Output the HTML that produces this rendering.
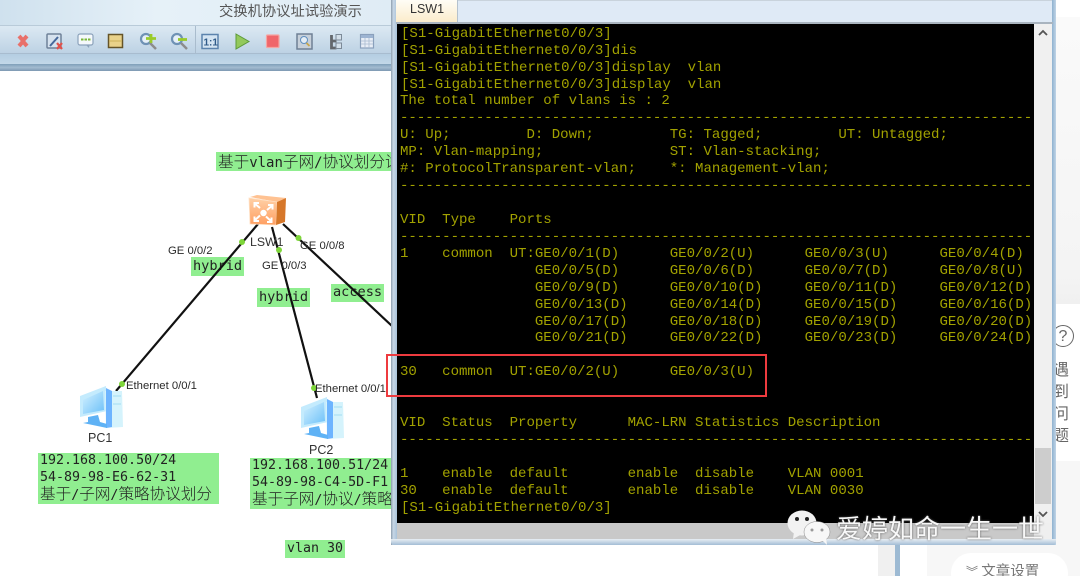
<!DOCTYPE html>
<html><head><meta charset="utf-8"><style>
html,body{margin:0;padding:0;background:#fff}
#p{position:relative;width:1080px;height:576px;overflow:hidden;background:#fff;font-family:"Liberation Sans","Noto Sans CJK SC",sans-serif}
.a{position:absolute}
.lb{position:absolute;background:#90ee90;color:#222;font-family:"DejaVu Sans Mono","Noto Sans CJK SC",monospace;font-size:13.3px;white-space:pre;overflow:hidden}
.lb div{position:absolute;left:2px;white-space:pre}
.c{font-family:"Noto Sans CJK SC",sans-serif;font-size:15.6px;font-weight:300}
.t{position:absolute;font-size:11.3px;color:#2a2a2a;white-space:pre;line-height:13px}
#term{position:absolute;left:397px;top:24px;width:637px;height:499px;background:#000;overflow:hidden}
#term div{position:absolute;left:3px;height:17px;line-height:17px;font-family:"Liberation Mono",monospace;font-size:14.06px;color:#a2a200;white-space:pre}
</style></head><body><div id="p">

<div class="a" style="left:0;top:0;width:392px;height:25px;background:linear-gradient(90deg,#cfe1ee,#e6f1f8 40%,#dfecf5)"></div>
<div class="a" style="left:0;top:25px;width:392px;height:1px;background:#b9cbd9"></div>
<div class="a" style="left:0;top:26px;width:392px;height:27px;background:linear-gradient(#dce9f3,#bdd2e4)"></div>
<div class="a" style="left:0;top:53px;width:392px;height:1px;background:#a8bccf"></div>
<div class="a" style="left:0;top:54px;width:392px;height:10px;background:linear-gradient(#b4cde2,#c2d7e8)"></div>
<div class="a" style="left:0;top:64px;width:392px;height:7px;background:linear-gradient(#7f9fb9,#a3bbd0 50%,#7c98b2)"></div>
<div class="a" style="left:195px;top:26px;width:1px;height:27px;background:#a9bccd"></div>
<div class="a" style="left:219px;top:1px;font-size:14.3px;line-height:20px;color:#555;white-space:pre;font-family:'Noto Sans CJK SC',sans-serif">交换机协议址试验演示</div>

<svg class="a" style="left:0;top:26px" width="392" height="28" viewBox="0 26 392 28">
<path d="M19 36l4 4.500 4-4.500M19 46l4-4.500 4 4.500" fill="none" stroke="#e8706a" stroke-width="4"/>
<rect x="47" y="34" width="14" height="14" rx="1" fill="#d6e2ee" stroke="#6f8199" stroke-width="1.500"/><path d="M50 46l8-9" stroke="#46689a" stroke-width="2"/><path d="M57 43l5 6m0-6l-5 6" stroke="#e0524c" stroke-width="2.200"/>
<rect x="78" y="34" width="15" height="11" rx="2" fill="#f4f8fb" stroke="#8ba2bb" stroke-width="1.200"/><path d="M86 45l3 3 .5-3z" fill="#8ba2bb"/><path d="M81 39.500h2.500m1 0h2.500m1 0h2.500" stroke="#7bb83a" stroke-width="2"/>
<rect x="108.500" y="34.500" width="14" height="13" fill="#e9d28a" stroke="#655428" stroke-width="1.500"/><path d="M109 41h13" stroke="#cdb15a"/>
<circle cx="146" cy="39" r="5" fill="#e6f0f8" stroke="#6f92b5" stroke-width="2.200"/><path d="M150 43l6 6" stroke="#8c8c8c" stroke-width="2.500"/><path d="M151 34v9m-5-4.500h10" stroke="#9acb2a" stroke-width="2.800"/>
<circle cx="177" cy="39" r="5" fill="#e6f0f8" stroke="#6f92b5" stroke-width="2.200"/><path d="M181 43l6 6" stroke="#8c8c8c" stroke-width="2.500"/><path d="M178 39.500h9" stroke="#9acb2a" stroke-width="2.800"/>
<rect x="202" y="34.500" width="16" height="14" fill="#d4e4f2" stroke="#5c83ad" stroke-width="1.500"/><text x="203.500" y="45.500" font-size="10" font-family="Liberation Sans" font-weight="bold" fill="#2f5a88">1:1</text>
<path d="M236 34l13 7.500-13 7.500z" fill="#93c95c" stroke="#5c9a3a"/>
<rect x="266.500" y="35" width="12.500" height="12.500" rx="1" fill="#f0666a" stroke="#f5a5a2" stroke-width="1.200"/>
<rect x="297" y="34" width="15" height="15" fill="#c7d0da" stroke="#6f8095" stroke-width="1.500"/><circle cx="304" cy="40" r="3.500" fill="#e4edf5" stroke="#5f8fc0"/><path d="M306.500 43l3 3" stroke="#c9a64b" stroke-width="1.800"/>
<path d="M331.500 35v13h5m-5-7h5" fill="none" stroke="#63676c" stroke-width="2.800"/><rect x="336" y="34.500" width="5.500" height="5.500" fill="#d3dfe9" stroke="#7c8a98"/><rect x="336" y="43" width="5.500" height="5.500" fill="#d3dfe9" stroke="#7c8a98"/>
<rect x="360.500" y="34.500" width="13" height="13.500" fill="#e8eef6" stroke="#8aa0bc" stroke-width="1.200"/><rect x="361" y="35" width="12" height="3" fill="#9db4d2"/><path d="M361 41h12M361 44h12M365 38v10M369 38v10" stroke="#a9bad0" stroke-width=".8"/>
</svg>

<div class="lb" style="left:216px;top:152px;width:178px;height:19px"><div style="top:-2px"><span class="c">基于</span><span style="font-size:14px">vlan</span><span class="c">子网</span><span style="font-size:14px">/</span><span class="c">协议划分试验</span></div></div>
<div class="lb" style="left:191px;top:257px;width:53px;height:19px;font-size:13.6px"><div style="top:1px;left:2px">hybrid</div></div>
<div class="lb" style="left:257px;top:288px;width:53px;height:19px;font-size:13.6px"><div style="top:1px;left:2px">hybrid</div></div>
<div class="lb" style="left:331px;top:284px;width:53px;height:18px;font-size:13.6px"><div style="top:0;left:2px">access</div></div>
<div class="lb" style="left:38px;top:453px;width:181px;height:51px"><div style="top:0">192.168.100.50/24</div><div style="top:17px">54-89-98-E6-62-31</div><div style="top:29px"><span class="c">基于</span>/<span class="c">子网</span>/<span class="c">策略协议划分</span></div></div>
<div class="lb" style="left:250px;top:458px;width:150px;height:51px"><div style="top:0">192.168.100.51/24</div><div style="top:17px">54-89-98-C4-5D-F1</div><div style="top:29px"><span class="c">基于子网</span>/<span class="c">协议</span>/<span class="c">策略协议划分</span></div></div>
<div class="lb" style="left:285px;top:540px;width:60px;height:18px"><div style="top:1px;left:2px">vlan 30</div></div>

<svg class="a" style="left:0;top:0" width="392" height="576" viewBox="0 0 392 576">
<defs><linearGradient id="o" x1="0" y1="0" x2="0" y2="1"><stop offset="0" stop-color="#ffd0a6"/><stop offset="1" stop-color="#ff9f62"/></linearGradient>
<linearGradient id="sc" x1="0" y1="0" x2="1" y2="1"><stop offset="0" stop-color="#d4f1ff"/><stop offset="1" stop-color="#6cc0f8"/></linearGradient></defs>
<g stroke="#111" stroke-width="2.200" fill="none"><path d="M258 224L116 391"/><path d="M272 227L317 398"/><path d="M283 224L392 326"/></g>
<g fill="#7ed63a"><circle cx="242" cy="242" r="3"/><circle cx="279" cy="250" r="3"/><circle cx="298.500" cy="238" r="3"/><circle cx="122" cy="384" r="3"/><circle cx="314" cy="388" r="3"/></g>
<path d="M250 197l7-2 29 3-9 4z" fill="#ffc292"/><path d="M249 198l28 4-1 23-26-1z" fill="url(#o)" stroke="#ffe0c4" stroke-width=".8"/><path d="M277 202l9-4-1 24-9 3z" fill="#d6772a"/>
<g stroke="#fff" stroke-width="2" fill="none"><path d="M254 203l6 5m-5.500-.500v-4.500h4.500M273 205l-6 5m5.500-.500v-4.500h-4.500M254 221l6-5.500m-5.500 1v4.500h4.500M272 222l-6-5.500m5.500 1v4.500h-4.500"/></g><circle cx="263.500" cy="213" r="3.200" fill="#fff"/>
<g id="pc">
<path d="M80 396l26-10 1 25-27 6z" fill="#c4ebfd"/><path d="M83 400l20-9 1 19-21 4z" fill="url(#sc)"/>
<path d="M105 391l17 0 1 36-17 1z" fill="#d5f3fc"/><path d="M106 388l6 3 0 36-6 1z" fill="#6db4ff"/>
<path d="M113 396h8M113 404h8" stroke="#a4dcf2" stroke-width="1"/>
<path d="M88 417l10-2 2 7 7 2v4l-24-5 5-1z" fill="#5fb2f5"/>
</g>
<use href="#pc" transform="translate(221 11)"/>
</svg>

<div class="t" style="left:168px;top:245px">GE 0/0/2</div>
<div class="t" style="left:250px;top:236px;font-size:12.300px;color:#333">LSW1</div>
<div class="t" style="left:262px;top:260px">GE 0/0/3</div>
<div class="t" style="left:300px;top:240px">GE 0/0/8</div>
<div class="t" style="left:126px;top:380px">Ethernet 0/0/1</div>
<div class="t" style="left:315px;top:383px">Ethernet 0/0/1</div>
<div class="t" style="left:88px;top:432px;font-size:12.500px;color:#333">PC1</div>
<div class="t" style="left:309px;top:444px;font-size:12.500px;color:#333">PC2</div>

<div class="a" style="left:1056px;top:0;width:24px;height:17px;background:#fff"></div>
<div class="a" style="left:1056px;top:17px;width:24px;height:287px;background:linear-gradient(#fafafa,#f4f4f4 90%,#f0f0f0)"></div>
<div class="a" style="left:1052px;top:325px;width:20px;height:20px;border:1.500px solid #666;border-radius:50%;color:#666;font-size:16px;line-height:21px;text-align:center">?</div>
<div class="a" style="left:1053px;top:357px;width:22px;font-size:16px;line-height:22px;color:#666;font-family:'Noto Sans CJK SC',sans-serif">遇<br>到<br>问<br>题</div>
<div class="a" style="left:927px;top:461px;width:153px;height:115px;background:#f7f7f7"></div>
<div class="a" style="left:878px;top:545px;width:17px;height:31px;background:#f0f0f0"></div>
<div class="a" style="left:895px;top:545px;width:5px;height:31px;background:#9dbad3"></div>
<div class="a" style="left:951px;top:553px;width:117px;height:40px;background:#fff;border-radius:20px"></div>
<div class="a" style="left:966px;top:561px;font-size:14.500px;line-height:20px;color:#777;white-space:pre;font-family:'Noto Sans CJK SC',sans-serif"><span style="font-size:12px">︾</span> 文章设置</div>

<div class="a" style="left:391px;top:0;width:665px;height:545px;background:#dfeaf6;border-radius:0 0 3px 3px;box-shadow:0 0 0 1px #c9d3dc inset"></div>
<div class="a" style="left:391px;top:0;width:6px;height:545px;background:linear-gradient(90deg,#8f9fae,#c7d7e6 40%,#a9c2d9)"></div>
<div class="a" style="left:1052px;top:0;width:4px;height:545px;background:linear-gradient(90deg,#8fb2d0,#c0d4e6)"></div>
<div class="a" style="left:396px;top:0;width:62px;height:22px;background:linear-gradient(#fffdf6,#fbeccb);border-right:1px solid #b5c2ce;box-sizing:border-box;font-size:12.500px;line-height:19px;padding-left:14px;color:#333">LSW1</div>
<div class="a" style="left:396px;top:22px;width:657px;height:2px;background:#a9b4bf"></div>
<div id="term">
<div style="top:2px;left:4px">[S1-GigabitEthernet0/0/3]</div>
<div style="top:19px;left:4px">[S1-GigabitEthernet0/0/3]dis</div>
<div style="top:36px;left:4px">[S1-GigabitEthernet0/0/3]display  vlan</div>
<div style="top:53px;left:4px">[S1-GigabitEthernet0/0/3]display  vlan</div>
<div style="top:69px">The total number of vlans is : 2</div>
<div style="top:86px">---------------------------------------------------------------------------</div>
<div style="top:103px">U: Up;         D: Down;         TG: Tagged;         UT: Untagged;</div>
<div style="top:120px">MP: Vlan-mapping;               ST: Vlan-stacking;</div>
<div style="top:137px">#: ProtocolTransparent-vlan;    *: Management-vlan;</div>
<div style="top:154px">---------------------------------------------------------------------------</div>
<div style="top:188px">VID  Type    Ports</div>
<div style="top:205px">---------------------------------------------------------------------------</div>
<div style="top:222px">1    common  UT:GE0/0/1(D)      GE0/0/2(U)      GE0/0/3(U)      GE0/0/4(D)</div>
<div style="top:239px">                GE0/0/5(D)      GE0/0/6(D)      GE0/0/7(D)      GE0/0/8(U)</div>
<div style="top:256px">                GE0/0/9(D)      GE0/0/10(D)     GE0/0/11(D)     GE0/0/12(D)</div>
<div style="top:273px">                GE0/0/13(D)     GE0/0/14(D)     GE0/0/15(D)     GE0/0/16(D)</div>
<div style="top:290px">                GE0/0/17(D)     GE0/0/18(D)     GE0/0/19(D)     GE0/0/20(D)</div>
<div style="top:306px">                GE0/0/21(D)     GE0/0/22(D)     GE0/0/23(D)     GE0/0/24(D)</div>
<div style="top:340px">30   common  UT:GE0/0/2(U)      GE0/0/3(U)</div>
<div style="top:391px">VID  Status  Property      MAC-LRN Statistics Description</div>
<div style="top:408px">---------------------------------------------------------------------------</div>
<div style="top:442px">1    enable  default       enable  disable    VLAN 0001</div>
<div style="top:459px">30   enable  default       enable  disable    VLAN 0030</div>
<div style="top:476px;left:4px">[S1-GigabitEthernet0/0/3]</div>
</div>
<div class="a" style="left:1034px;top:24px;width:18px;height:499px;background:#f0f0f0"></div>
<div class="a" style="left:1035px;top:448px;width:16px;height:56px;background:#cdcdcd"></div>
<svg class="a" style="left:1034px;top:24px" width="18" height="18"><path d="M5 11l4-4 4 4" fill="none" stroke="#555" stroke-width="1.800"/></svg>
<svg class="a" style="left:1034px;top:505px" width="18" height="18"><path d="M5 7l4 4 4-4" fill="none" stroke="#555" stroke-width="1.800"/></svg>
<div class="a" style="left:397px;top:523px;width:637px;height:16px;background:#c9c9c9"></div>
<div class="a" style="left:1034px;top:523px;width:18px;height:16px;background:#efefef"></div>
<div class="a" style="left:391px;top:539px;width:665px;height:6px;background:linear-gradient(#e8eef4,#a3bdd5);border-radius:0 0 3px 3px"></div>

<div class="a" style="left:386px;top:354px;width:377px;height:39px;border:2px solid #ee3b3f"></div>

<svg class="a" style="left:785px;top:505px" width="52" height="42" viewBox="0 0 52 42">
<ellipse cx="17" cy="18" rx="14.500" ry="12.500" fill="#f2f2f2"/><path d="M9 27l-1 7 9-5z" fill="#f2f2f2"/>
<circle cx="12" cy="14" r="2" fill="#222"/><circle cx="22" cy="14" r="2" fill="#222"/>
<ellipse cx="32" cy="27" rx="13" ry="10.500" fill="#f7f7f7" stroke="#888" stroke-width=".5"/><path d="M37 35l5 5-1-8z" fill="#f7f7f7"/>
<circle cx="27" cy="25" r="1.500" fill="#999"/><circle cx="37" cy="25" r="1.500" fill="#999"/>
</svg>
<div class="a" style="left:836px;top:511px;font-size:26px;line-height:34px;color:#f8f8f8;white-space:pre;text-shadow:0 0 2px #555;font-family:'Noto Sans CJK SC',sans-serif">爱婷如命一生一世</div>

</div></body></html>
